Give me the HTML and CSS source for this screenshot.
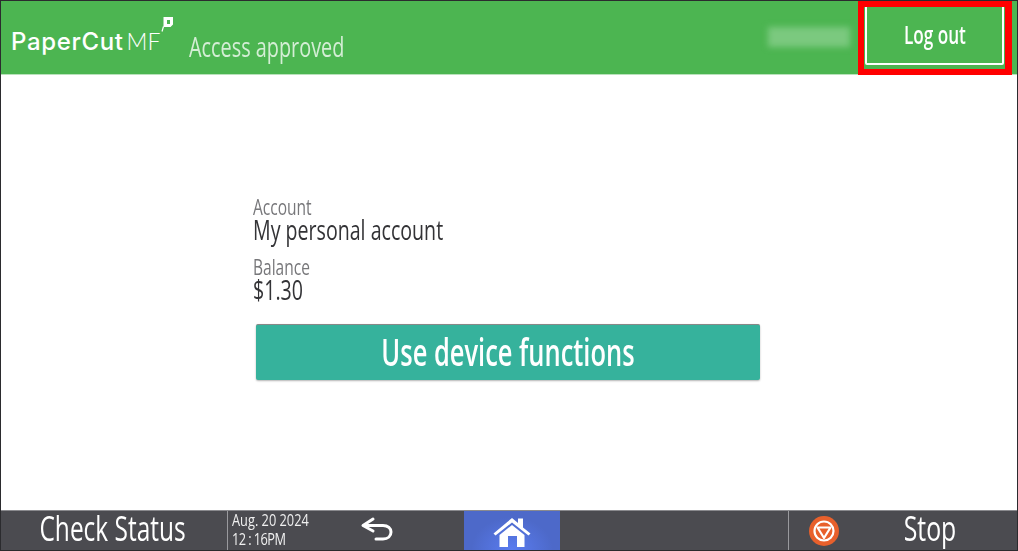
FILE: index.html
```html
<!DOCTYPE html>
<html lang="en">
<head>
    <meta charset="UTF-8">
    <meta name="viewport" content="width=device-width, initial-scale=1.0">
    <title>PaperCut MF</title>
    <link rel="stylesheet" href="styles.css">
</head>
<body>
    <div class="screen">
        <header class="top-bar">
            <div class="logo">
                <span class="logo-name">PaperCut</span><span class="logo-mf">MF</span>
                <svg class="logo-leaf" width="14" height="17" viewBox="0 0 14 17">
                    <path d="M3.500 1H13V8.500L10.500 11H3.500z M7 4V8H10V4z" fill="#fff" fill-rule="evenodd"/>
                    <path d="M3.500 10.500L2 15.500" stroke="#fff" stroke-width="1.200" fill="none"/>
                </svg>
            </div>
            <div class="status"><span class="narrow">Access approved</span></div>
            <div class="user-blur"></div>
            <div class="logout-wrap">
                <button class="logout-btn"><span class="narrow">Log out</span></button>
            </div>
            <div class="highlight"></div>
        </header>

        <main class="content">
            <div class="panel">
                <div class="field">
                    <div class="field-label"><span class="narrow">Account</span></div>
                    <div class="field-value"><span class="narrow">My personal account</span></div>
                </div>
                <div class="field">
                    <div class="field-label"><span class="narrow">Balance</span></div>
                    <div class="field-value"><span class="narrow">$1.30</span></div>
                </div>
                <button class="primary-btn"><span class="narrow">Use device functions</span></button>
            </div>
        </main>

        <footer class="device-bar">
            <div class="check-status"><span class="narrow">Check Status</span></div>
            <div class="clock">
                <div><span class="narrow">Aug. 20 2024</span></div>
                <div class="clock-time"><span class="narrow">12 : 16PM</span></div>
            </div>
            <div class="back">
                <svg width="34" height="26" viewBox="0 0 34 26">
                    <path d="M13 3L3 9.500L13 15" fill="none" stroke="#fff" stroke-width="3" stroke-linecap="round" stroke-linejoin="round"/>
                    <path d="M4 9.500H23C28 9.500 31 12.500 31 16C31 20 28 23 23 23H16" fill="none" stroke="#fff" stroke-width="3" stroke-linecap="round"/>
                </svg>
            </div>
            <div class="home">
                <svg width="38" height="30" viewBox="0 0 38 30">
                    <path d="M0.500 16.500L19 1L25 6V1.500H30V10.500L37.500 16.500L35.500 18.500L19 5.500L2.500 18.500z" fill="#fff"/>
                    <path d="M6.500 18L19 8L31.500 18V30H6.500z M15 19V30H24V19z" fill="#fff" fill-rule="evenodd"/>
                </svg>
            </div>
            <div class="spacer"></div>
            <div class="stop">
                <svg class="stop-icon" width="30" height="30" viewBox="0 0 30 30">
                    <circle cx="15" cy="15" r="15" fill="#e8602c"/>
                    <circle cx="15" cy="15" r="9.500" fill="none" stroke="#fff" stroke-width="2.200"/>
                    <path d="M8.500 11.500H21.500L15 22z" fill="none" stroke="#fff" stroke-width="2.200" stroke-linejoin="round"/>
                </svg>
                <div class="stop-label"><span class="narrow">Stop</span></div>
            </div>
        </footer>
    </div>
</body>
</html>
```

FILE: styles.css
```css
html, body {
    margin: 0;
    height: 100%;
}

body {
    font-family: 'Open Sans', 'Noto Sans', sans-serif;
    background-color: #2b2b2e;
    overflow: hidden;
}

.screen {
    width: 1018px;
    height: 551px;
    box-sizing: border-box;
    padding: 1px;
    display: flex;
    flex-direction: column;
}

/* squeezed text, the device font is condensed */
.narrow {
    display: inline-block;
    transform: scaleX(0.72);
    white-space: nowrap;
}

.top-bar {
    position: relative;
    height: 74px;
    flex-shrink: 0;
    background-color: #4cb551;
    border-bottom: 1px solid #b9e2bb;
    box-sizing: border-box;
    display: flex;
    align-items: stretch;
    color: white;
}

.logo {
    position: relative;
    width: 188px;
    padding-left: 10px;
    box-sizing: border-box;
    display: flex;
    align-items: baseline;
    padding-top: 26px;
    font-family: 'Inter', sans-serif;
}

.logo-name {
    font-size: 24px;
    font-weight: 500;
    letter-spacing: 0.65px;
}

.logo-mf {
    font-family: 'Lato', sans-serif;
    font-size: 23px;
    font-weight: 300;
    margin-left: 3px;
}

.logo-leaf {
    position: absolute;
    left: 159px;
    top: 15px;
}

.status {
    width: 160px;
    padding-top: 29px;
    font-size: 27px;
    line-height: 34px;
    color: #d4eed5;
}

.status .narrow {
    transform: scaleX(0.735);
}

.status .narrow,
.field .narrow,
.clock .narrow {
    transform-origin: left center;
}

.user-blur {
    width: 82px;
    height: 20px;
    margin: 26px 0 0 419px;
    background-color: #7bc97f;
    filter: blur(3px);
}

.logout-wrap {
    margin-left: 15px;
    padding-top: 4px;
}

.logout-btn {
    width: 139px;
    height: 60px;
    background-color: transparent;
    border: 2px solid #fff;
    border-radius: 2px;
    color: white;
    font-family: inherit;
    font-size: 26px;
    font-weight: 600;
    padding: 0 0 3px;
}

.logout-btn .narrow {
    transform: scaleX(0.66);
}

.highlight {
    position: absolute;
    left: 857px;
    top: 0;
    width: 154px;
    height: 74px;
    box-sizing: border-box;
    border: solid #ff0000;
    border-width: 6px 7px 6px 6px;
}

.content {
    flex: 1;
    background-color: white;
    display: flex;
    justify-content: center;
}

.panel {
    width: 508px;
    padding-top: 122px;
    margin-left: -4px;
}

.field {
    margin-bottom: 17px;
}

.field-label {
    font-size: 21px;
    line-height: 21px;
    color: #77777a;
}

.field-label .narrow {
    transform: scaleX(0.74);
}

.field-value {
    font-size: 28px;
    line-height: 22px;
    color: #333336;
}

.field-value .narrow {
    transform: scaleX(0.7);
}

.primary-btn {
    display: block;
    width: 504px;
    height: 56px;
    margin: 24px 0 0 3px;
    background-color: #36b29c;
    border: none;
    border-top: 1px solid #888;
    border-radius: 2px;
    box-shadow: 0 1px 2px rgba(0, 0, 0, 0.3);
    color: white;
    font-family: inherit;
    font-size: 38px;
    font-weight: 600;
    padding: 0 0 4px;
}

.primary-btn .narrow {
    transform: scaleX(0.67);
}

.device-bar {
    height: 40px;
    flex-shrink: 0;
    background-color: #4b4b50;
    border-top: 1px solid #8a8a8e;
    box-sizing: border-box;
    display: flex;
    align-items: stretch;
    color: white;
}

.check-status {
    width: 227px;
    padding-right: 3px;
    text-align: center;
    font-size: 34px;
    line-height: 35px;
    border-right: 1px solid #9a9a9e;
    box-sizing: border-box;
}

.clock {
    width: 119px;
    padding-left: 4px;
    font-size: 16px;
    line-height: 19px;
    color: #f0f0f0;
    box-sizing: border-box;
}

.clock .narrow {
    transform: scaleX(0.8);
}

.clock-time {
    letter-spacing: -0.7px;
}

.back {
    width: 117px;
    display: flex;
    align-items: center;
    padding: 0 0 4px 13px;
    box-sizing: border-box;
}

.home {
    width: 96px;
    box-sizing: border-box;
    padding-bottom: 3px;
    background: radial-gradient(ellipse at 50% 100%, #5a7cf0 0%, #4d69c9 60%);
    display: flex;
    justify-content: center;
    align-items: flex-end;
}

.spacer {
    width: 228px;
    border-right: 1px solid #9a9a9e;
}

.stop {
    flex: 1;
    display: flex;
    align-items: center;
    box-sizing: border-box;
    padding-left: 20px;
}

.stop-label {
    font-size: 34px;
    line-height: 35px;
    align-self: flex-start;
    margin-left: 55px;
}

.stop-label .narrow {
    transform: scaleX(0.73);
}
```
